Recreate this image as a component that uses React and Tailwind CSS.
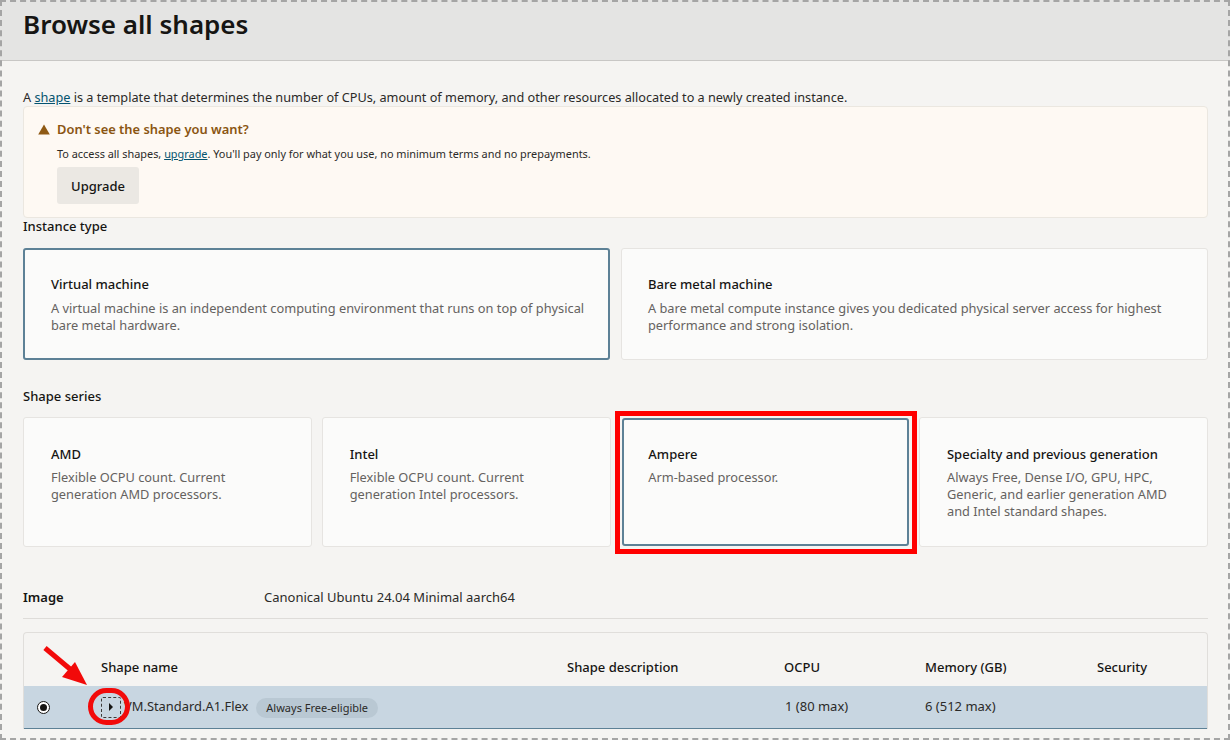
import React from 'react';

const font = { fontFamily: '"Noto Sans", "Open Sans", sans-serif' };

const InstanceCard = ({ title, text, selected }) => (
  <div className={`w-[587px] h-[112px] rounded-[3px] bg-[#fbfbfa] pr-[16px] ${selected ? 'border-2 border-[#5d8196] pl-[26px] pt-[24px]' : 'border border-[#e6e4e1] pl-[26px] pt-[25px]'}`}>
    <div className="text-[13px] leading-[20px] font-medium text-[#161513]">{title}</div>
    <div className="mt-[6px] text-[12.8px] leading-[17px] text-[#65625f]">{text}</div>
  </div>
);

const SeriesCard = ({ title, lines, selected }) => (
  <div className="w-[289px] h-[130px] shrink-0">
    <div className={`rounded-[3px] bg-[#fbfbfa] pr-[20px] ${selected ? 'ml-[2px] mt-[1px] h-[128px] border-2 border-[#5d8196] pl-[24px] pt-[24px]' : 'h-[130px] border border-[#e6e4e1] pl-[27px] pt-[26px]'}`}>
      <div className="text-[13px] leading-[20px] font-medium text-[#161513]">{title}</div>
      <div className="mt-[5px] text-[12.8px] leading-[17px] text-[#65625f]">
        {lines.map(l => <div key={l}>{l}</div>)}
      </div>
    </div>
  </div>
);

const App = () => {
  return (
    <div style={font} className="relative w-[1230px] h-[740px] overflow-hidden bg-[#f5f4f2] text-[#161513]">
      {/* Header */}
      <div className="h-[61px] bg-[#e4e4e3] border-b border-[#c8c7c5] pl-[23px] pt-[6px]">
        <h1 className="text-[26px] leading-[36px] font-semibold">Browse all shapes</h1>
      </div>

      <div className="pl-[23px] pr-[22px]">
        <p className="mt-[28px] text-[12.7px] leading-[17px] text-[#2b2a28]">
          A <a className="text-[#04536f] underline">shape</a> is a template that determines the number of CPUs, amount of memory, and other resources allocated to a newly created instance.
        </p>

        {/* Warning */}
        <div className="h-[112px] rounded-[4px] border border-[#ebe7e0] bg-[#fef9f3] pl-[14px] pt-[12px]">
          <div className="flex items-center gap-[7px]">
            <svg width="12" height="11" viewBox="0 0 12 11"><path d="M6 0.5 L11.8 10.5 H0.2 Z" fill="#8f5a14" /></svg>
            <span className="text-[12.9px] leading-[20px] font-semibold text-[#8a5511]">Don't see the shape you want?</span>
          </div>
          <div className="ml-[19px] mt-[7px] text-[10.9px] leading-[16px] text-[#2b2a28]">
            To access all shapes, <a className="text-[#04536f] underline">upgrade</a>. You'll pay only for what you use, no minimum terms and no prepayments.
          </div>
          <button className="ml-[19px] mt-[5px] w-[82px] h-[37px] pt-[2px] rounded-[3px] bg-[#ebe8e3] text-[13px] font-medium text-[#161513]">Upgrade</button>
        </div>

        <div className="text-[13px] leading-[16px] font-medium">Instance type</div>
        <div className="mt-[14px] flex justify-between">
          <InstanceCard selected title="Virtual machine" text="A virtual machine is an independent computing environment that runs on top of physical bare metal hardware." />
          <InstanceCard title="Bare metal machine" text="A bare metal compute instance gives you dedicated physical server access for highest performance and strong isolation." />
        </div>

        <div className="mt-[28px] text-[13px] leading-[17px] font-medium">Shape series</div>
        <div className="mt-[12px] flex justify-between">
          <SeriesCard title="AMD" lines={['Flexible OCPU count. Current', 'generation AMD processors.']} />
          <SeriesCard title="Intel" lines={['Flexible OCPU count. Current', 'generation Intel processors.']} />
          <SeriesCard selected title="Ampere" lines={['Arm-based processor.']} />
          <SeriesCard title="Specialty and previous generation" lines={['Always Free, Dense I/O, GPU, HPC,', 'Generic, and earlier generation AMD', 'and Intel standard shapes.']} />
        </div>

        {/* Image */}
        <div className="mt-[41px] h-[31px] flex border-b border-[#dedcd9]">
          <div className="w-[241px] text-[13px] leading-[18px] font-semibold">Image</div>
          <div className="text-[13px] leading-[18px] text-[#2b2a28]">Canonical Ubuntu 24.04 Minimal aarch64</div>
        </div>

        {/* Shapes table */}
        <div className="mt-[13px] rounded-t-[4px] border border-[#e0dedb] border-b-0">
          <div className="h-[53px] flex items-end pb-[10px] text-[13px] leading-[18px] font-medium">
            <div className="ml-[77px] w-[466px]">Shape name</div>
            <div className="w-[217px]">Shape description</div>
            <div className="w-[141px]">OCPU</div>
            <div className="w-[172px]">Memory (GB)</div>
            <div>Security</div>
          </div>
          <div className="h-[43px] flex items-center bg-[#c8d6e1] border-b border-[#5d8196] text-[13px] text-[#2b2a28]">
            <div className="w-[77px] shrink-0 pl-[13px]">
              <div className="w-[13px] h-[13px] rounded-full border-[1.5px] border-[#161513] bg-white flex items-center justify-center">
                <div className="w-[7px] h-[7px] rounded-full bg-[#161513]" />
              </div>
            </div>
            <div className="w-[466px] shrink-0 flex items-center">
              <div className="w-[20px] h-[21px] rounded-[2px] border border-dashed border-[#3c3a38] flex items-center justify-center">
                <svg width="6" height="8" viewBox="0 0 6 8"><path d="M1 0 L5 4 L1 8 Z" fill="#161513" /></svg>
              </div>
              <div className="ml-[3px] text-[12.9px]">VM.Standard.A1.Flex</div>
              <div className="ml-[8px] mt-[2px] h-[20px] px-[10px] rounded-full bg-[#b9c8d3] flex items-center text-[11px] text-[#2b2a28]">Always Free-eligible</div>
            </div>
            <div className="w-[217px] shrink-0" />
            <div className="w-[141px] shrink-0 pl-[1px]">1 (80 max)</div>
            <div>6 (512 max)</div>
          </div>
        </div>
      </div>

      {/* Annotations */}
      <div className="absolute left-[615px] top-[411px] w-[302px] h-[143px] border-[5px] border-[#ff0000] pointer-events-none" />
      <div className="absolute left-[88px] top-[688px] w-[42px] h-[37px] rounded-full border-[5px] border-[#f20a0a] pointer-events-none" />
      <svg className="absolute left-[42px] top-[646px] pointer-events-none" width="48" height="42" viewBox="0 0 48 42">
        <path d="M3 2 L28 23" stroke="#f20a0a" strokeWidth="5" fill="none" />
        <path d="M45 39 L20 31 L33 16 Z" fill="#f20a0a" />
      </svg>

      {/* Dashed screenshot frame */}
      <div className="absolute inset-0 border-2 border-dashed border-[#a5a5a5] pointer-events-none" />
    </div>
  );
};

export default App;
